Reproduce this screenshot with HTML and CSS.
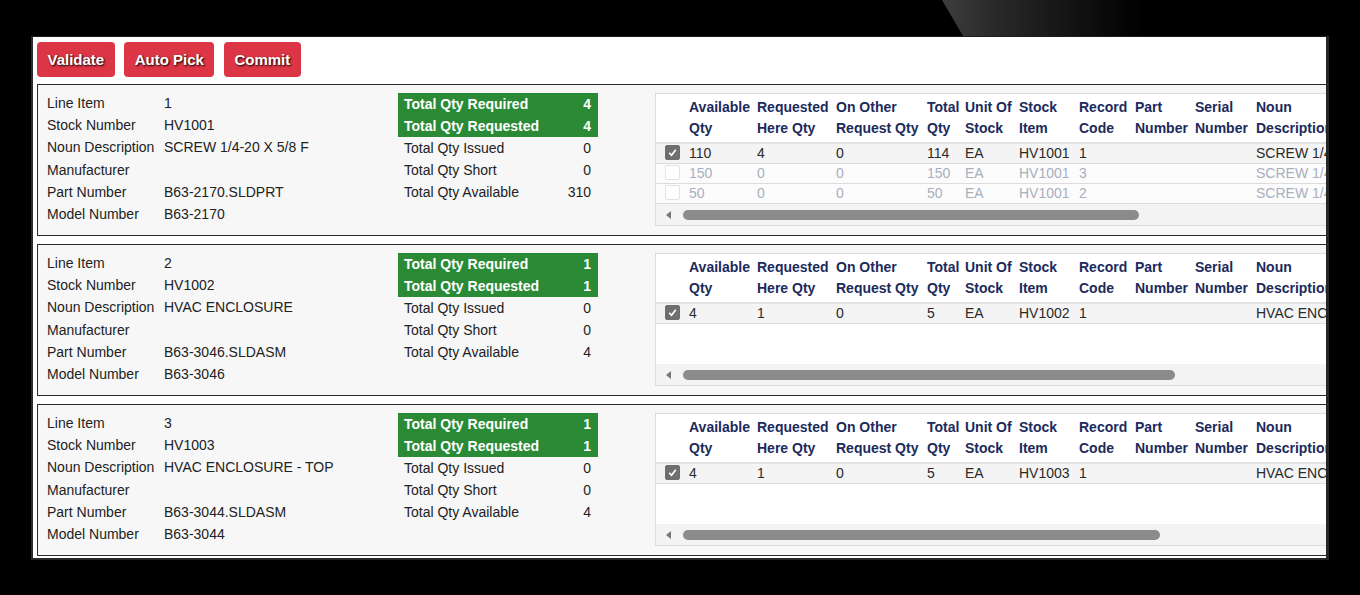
FILE: index.html
```html
<!DOCTYPE html>
<html lang="en">
  <head>
    <meta charset="UTF-8" />
    <meta name="viewport" content="width=device-width, initial-scale=1.0" />
    <title>Pick List</title>
    <link rel="stylesheet" href="styles.css">
  </head>
  <body>
    <div class="topbar"><div class="wedge"></div></div>

    <div class="panel">
      <div class="toolbar">
        <button class="btn">Validate</button>
        <button class="btn">Auto Pick</button>
        <button class="btn">Commit</button>
      </div>

      <div class="cards">
        <!-- line item 1 -->
        <div class="card">
          <table class="info">
            <tr><td class="lbl">Line Item</td><td>1</td></tr>
            <tr><td class="lbl">Stock Number</td><td>HV1001</td></tr>
            <tr><td class="lbl">Noun Description</td><td>SCREW 1/4-20 X 5/8 F</td></tr>
            <tr><td class="lbl">Manufacturer</td><td></td></tr>
            <tr><td class="lbl">Part Number</td><td>B63-2170.SLDPRT</td></tr>
            <tr><td class="lbl">Model Number</td><td>B63-2170</td></tr>
          </table>
          <table class="totals">
            <tr class="ok"><td>Total Qty Required</td><td class="num">4</td></tr>
            <tr class="ok"><td>Total Qty Requested</td><td class="num">4</td></tr>
            <tr><td>Total Qty Issued</td><td class="num">0</td></tr>
            <tr><td>Total Qty Short</td><td class="num">0</td></tr>
            <tr><td>Total Qty Available</td><td class="num">310</td></tr>
          </table>
          <div class="grid">
            <table class="stock">
              <colgroup>
                <col class="c-chk"><col class="c-avail"><col class="c-req"><col class="c-other"><col class="c-total"><col class="c-unit"><col class="c-stock"><col class="c-rec"><col class="c-part"><col class="c-serial"><col class="c-noun">
              </colgroup>
              <thead>
                <tr><th></th><th>Available<br>Qty</th><th>Requested<br>Here Qty</th><th>On Other<br>Request Qty</th><th>Total<br>Qty</th><th>Unit Of<br>Stock</th><th>Stock<br>Item</th><th>Record<br>Code</th><th>Part<br>Number</th><th>Serial<br>Number</th><th>Noun<br>Description</th></tr>
              </thead>
              <tbody>
                <tr class="picked"><td class="chk"><span class="box on"><svg viewBox="0 0 14 14"><path d="M3.5 7.5l2.5 2.5 4.5-6"/></svg></span></td><td>110</td><td>4</td><td>0</td><td>114</td><td>EA</td><td>HV1001</td><td>1</td><td></td><td></td><td>SCREW 1/4-20 X 5/8 F</td></tr>
                <tr class="off"><td class="chk"><span class="box"></span></td><td>150</td><td>0</td><td>0</td><td>150</td><td>EA</td><td>HV1001</td><td>3</td><td></td><td></td><td>SCREW 1/4-20 X 5/8 F</td></tr>
                <tr class="off"><td class="chk"><span class="box"></span></td><td>50</td><td>0</td><td>0</td><td>50</td><td>EA</td><td>HV1001</td><td>2</td><td></td><td></td><td>SCREW 1/4-20 X 5/8 F</td></tr>
              </tbody>
            </table>
            <div class="hscroll"><span class="arrow"></span><span class="thumb" style="width: 456px"></span></div>
          </div>
        </div>

        <!-- line item 2 -->
        <div class="card">
          <table class="info">
            <tr><td class="lbl">Line Item</td><td>2</td></tr>
            <tr><td class="lbl">Stock Number</td><td>HV1002</td></tr>
            <tr><td class="lbl">Noun Description</td><td>HVAC ENCLOSURE</td></tr>
            <tr><td class="lbl">Manufacturer</td><td></td></tr>
            <tr><td class="lbl">Part Number</td><td>B63-3046.SLDASM</td></tr>
            <tr><td class="lbl">Model Number</td><td>B63-3046</td></tr>
          </table>
          <table class="totals">
            <tr class="ok"><td>Total Qty Required</td><td class="num">1</td></tr>
            <tr class="ok"><td>Total Qty Requested</td><td class="num">1</td></tr>
            <tr><td>Total Qty Issued</td><td class="num">0</td></tr>
            <tr><td>Total Qty Short</td><td class="num">0</td></tr>
            <tr><td>Total Qty Available</td><td class="num">4</td></tr>
          </table>
          <div class="grid">
            <table class="stock">
              <colgroup>
                <col class="c-chk"><col class="c-avail"><col class="c-req"><col class="c-other"><col class="c-total"><col class="c-unit"><col class="c-stock"><col class="c-rec"><col class="c-part"><col class="c-serial"><col class="c-noun">
              </colgroup>
              <thead>
                <tr><th></th><th>Available<br>Qty</th><th>Requested<br>Here Qty</th><th>On Other<br>Request Qty</th><th>Total<br>Qty</th><th>Unit Of<br>Stock</th><th>Stock<br>Item</th><th>Record<br>Code</th><th>Part<br>Number</th><th>Serial<br>Number</th><th>Noun<br>Description</th></tr>
              </thead>
              <tbody>
                <tr class="picked"><td class="chk"><span class="box on"><svg viewBox="0 0 14 14"><path d="M3.5 7.5l2.5 2.5 4.5-6"/></svg></span></td><td>4</td><td>1</td><td>0</td><td>5</td><td>EA</td><td>HV1002</td><td>1</td><td></td><td></td><td>HVAC ENCLOSURE</td></tr>
              </tbody>
            </table>
            <div class="hscroll"><span class="arrow"></span><span class="thumb" style="width: 492px"></span></div>
          </div>
        </div>

        <!-- line item 3 -->
        <div class="card">
          <table class="info">
            <tr><td class="lbl">Line Item</td><td>3</td></tr>
            <tr><td class="lbl">Stock Number</td><td>HV1003</td></tr>
            <tr><td class="lbl">Noun Description</td><td>HVAC ENCLOSURE - TOP</td></tr>
            <tr><td class="lbl">Manufacturer</td><td></td></tr>
            <tr><td class="lbl">Part Number</td><td>B63-3044.SLDASM</td></tr>
            <tr><td class="lbl">Model Number</td><td>B63-3044</td></tr>
          </table>
          <table class="totals">
            <tr class="ok"><td>Total Qty Required</td><td class="num">1</td></tr>
            <tr class="ok"><td>Total Qty Requested</td><td class="num">1</td></tr>
            <tr><td>Total Qty Issued</td><td class="num">0</td></tr>
            <tr><td>Total Qty Short</td><td class="num">0</td></tr>
            <tr><td>Total Qty Available</td><td class="num">4</td></tr>
          </table>
          <div class="grid">
            <table class="stock">
              <colgroup>
                <col class="c-chk"><col class="c-avail"><col class="c-req"><col class="c-other"><col class="c-total"><col class="c-unit"><col class="c-stock"><col class="c-rec"><col class="c-part"><col class="c-serial"><col class="c-noun">
              </colgroup>
              <thead>
                <tr><th></th><th>Available<br>Qty</th><th>Requested<br>Here Qty</th><th>On Other<br>Request Qty</th><th>Total<br>Qty</th><th>Unit Of<br>Stock</th><th>Stock<br>Item</th><th>Record<br>Code</th><th>Part<br>Number</th><th>Serial<br>Number</th><th>Noun<br>Description</th></tr>
              </thead>
              <tbody>
                <tr class="picked"><td class="chk"><span class="box on"><svg viewBox="0 0 14 14"><path d="M3.5 7.5l2.5 2.5 4.5-6"/></svg></span></td><td>4</td><td>1</td><td>0</td><td>5</td><td>EA</td><td>HV1003</td><td>1</td><td></td><td></td><td>HVAC ENCLOSURE - TOP</td></tr>
              </tbody>
            </table>
            <div class="hscroll"><span class="arrow"></span><span class="thumb" style="width: 477px"></span></div>
          </div>
        </div>
      </div>
    </div>
  </body>
</html>
```

FILE: styles.css
```css
/* Pick list page */
body {
  margin: 0;
  background-color: #000;
  font-family: "Liberation Sans", Arial, sans-serif;
  font-size: 14px;
  color: #222;
}

.topbar {
  height: 36px;
}
.wedge {
  margin-left: 942px;
  height: 36px;
  clip-path: polygon(0 0, 100% 0, 100% 100%, 21px 100%);
  background: linear-gradient(to right, #3d3d3d 0, #2a2a2a 50px, #131313 130px, #000 200px);
}

.panel {
  margin-left: 31px;
  width: 1293px;
  height: 521px;
  background-color: #fff;
  border-top: 1px solid #1e1e1e;
  border-left: 2px solid #2b2b2b;
  border-right: 3px solid #262626;
  border-bottom: 2px solid #262626;
  overflow: hidden;
}

.toolbar {
  display: flex;
  gap: 9.5px;
  padding: 5px 0 0 4px;
}
.btn {
  height: 35px;
  padding: 0 10.5px;
  background-color: #dc3545;
  color: #fff;
  border: none;
  border-radius: 4px;
  font-family: "Liberation Sans", Arial, sans-serif;
  font-size: 15px;
  font-weight: bold;
  text-shadow: 1px 1px 2px #000;
  cursor: pointer;
}

.cards {
  display: flex;
  flex-direction: column;
  gap: 8px;
  padding: 7px 0 0 4px;
}
.card {
  display: flex;
  align-items: flex-start;
  width: 1400px;
  flex-shrink: 0;
  padding: 8px 0 9px 9px;
  background-color: #f7f7f7;
  border: 1px solid #2a2a2a;
}

table {
  border-collapse: collapse;
  border-spacing: 0;
}
td, th {
  padding: 0;
}

.info {
  width: 351px;
  margin-top: -1px;
}
.info td {
  height: 22.2px;
  line-height: 22.2px;
  white-space: nowrap;
}
.info .lbl {
  width: 117px;
}

.totals {
  width: 200px;
}
.totals td {
  height: 22px;
  line-height: 22px;
  padding: 0 7px 0 6px;
  white-space: nowrap;
}
.totals .num {
  text-align: right;
}
.totals .ok td {
  background-color: #2a8a35;
  color: #fff;
  font-weight: bold;
}

.grid {
  margin-left: 57px;
  width: 760px;
  height: 131px;
  display: flex;
  flex-direction: column;
  background-color: #fff;
  border: 1px solid #dcdcdc;
}
.stock {
  table-layout: fixed;
  width: 758px;
  flex-shrink: 0;
}
.c-chk { width: 31px; }
.c-avail { width: 68px; }
.c-req { width: 79px; }
.c-other { width: 91px; }
.c-total { width: 38px; }
.c-unit { width: 54px; }
.c-stock { width: 60px; }
.c-rec { width: 56px; }
.c-part { width: 60px; }
.c-serial { width: 61px; }
.c-noun { width: 160px; }

.stock th {
  padding: 3px 2px;
  line-height: 21px;
  text-align: left;
  color: #1c2a5c;
  font-weight: bold;
  white-space: nowrap;
  border-bottom: 2px solid #e2e2e2;
}
.stock td {
  height: 19px;
  line-height: 19px;
  padding: 0 2px;
  white-space: nowrap;
  overflow: hidden;
  border-bottom: 1px solid #dcdcdc;
  color: #2a2a2a;
}
.stock tr.picked td {
  background-color: #f4f4f4;
}
.stock tr.off td {
  background-color: #fcfcfc;
  color: #a8afbf;
}
.stock td.chk {
  padding-left: 9px;
}

.box {
  display: inline-block;
  width: 13px;
  height: 13px;
  vertical-align: -2px;
  border: 1px solid #e3e3e3;
  border-radius: 2px;
  background-color: #fff;
}
.box.on {
  background-color: #6f6f6f;
  border-color: #6f6f6f;
}
.box svg {
  display: block;
  width: 13px;
  height: 13px;
  fill: none;
  stroke: #fff;
  stroke-width: 1.8;
}

.hscroll {
  margin-top: auto;
  height: 21px;
  display: flex;
  align-items: center;
  background-color: #f3f3f3;
}
.arrow {
  margin-left: 10px;
  width: 0;
  height: 0;
  border-top: 4px solid transparent;
  border-bottom: 4px solid transparent;
  border-right: 5px solid #777;
}
.thumb {
  margin-left: 12px;
  height: 10px;
  border-radius: 5px;
  background-color: #8b8b8b;
}
```
